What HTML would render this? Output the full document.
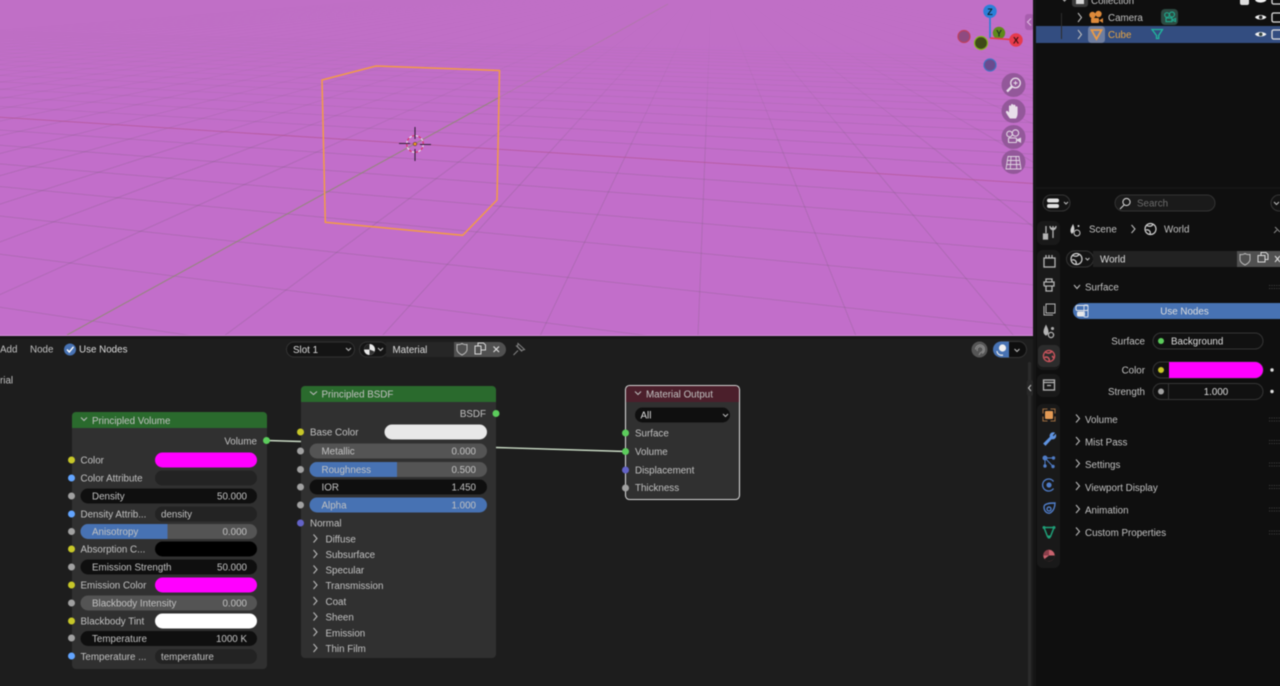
<!DOCTYPE html>
<html lang="en"><head><meta charset="utf-8"><title>Blender Shading</title>
<style>
html,body{margin:0;padding:0;width:1280px;height:686px;overflow:hidden;background:#1d1d1d}
#clip{position:absolute;left:0;top:0;width:1280px;height:686px;overflow:hidden;contain:paint}
svg{display:block;position:absolute;left:-10px;top:-10px;filter:blur(.45px)}
text{font-family:"Liberation Sans",sans-serif;font-size:9.8px;fill:#c2c2c2}
.e{text-anchor:end}.m{text-anchor:middle}.w{fill:#dedede}
.ch{fill:none;stroke:#b8b8b8;stroke-width:1.1}
</style></head><body>
<div id="clip">
<svg width="1300" height="706" viewBox="-10 -10 1300 706" xmlns="http://www.w3.org/2000/svg">
<defs>
<linearGradient id="fade" x1="0" y1="0" x2="0" y2="1"><stop offset="0" stop-color="#c06fc6"/><stop offset=".3" stop-color="#c06fc6" stop-opacity=".85"/><stop offset="1" stop-color="#c26eca" stop-opacity="0"/></linearGradient>
<clipPath id="vp"><rect x="-10" y="-10" width="1043" height="345"/></clipPath>
</defs>
<rect x="-10" y="-10" width="1300" height="706" fill="#1d1d1d"/>
<!-- viewport -->
<g clip-path="url(#vp)">
<rect x="-10" y="-10" width="1043" height="345" fill="#c26eca"/>
<g stroke="#5a5a5a" stroke-opacity=".18" stroke-width="1" fill="none">
<path d="M-10 305.7L1033 460.9M-10 252.9L1033 384.1M-10 214.9L1033 327.8M-10 185.6L1033 284.9M-10 163L1033 251.5M-10 144.5L1033 224.4M-10 129.3L1033 202.3M-10 105.8L1033 167.7M-10 96.5L1033 154.1M-10 88.5L1033 142.3M-10 81.4L1033 132M-10 75L1033 122.7M-10 69.5L1033 114.5M-10 64.5L1033 107.2M-10 60L1033 100.6M-10 56L1033 94.6M-10 52.2L1033 89.2M-10 48.8L1033 84.2M-10 45.7L1033 79.6M-10 42.8L1033 75.4M-10 40.1L1033 71.5M-10 37.7L1033 67.9M-10 35.4L1033 64.6M-10 33.3L1033 61.5M-10 31.2L1033 58.4"/>
<path d="M712 -26L-3884 336M712 -26L-3726 336M712 -26L-3568 336M712 -26L-3410 336M712 -26L-3252 336M712 -26L-3094 336M712 -26L-2936 336M712 -26L-2778 336M712 -26L-2620 336M712 -26L-2462 336M712 -26L-2304 336M712 -26L-2146 336M712 -26L-1988 336M712 -26L-1830 336M712 -26L-1672 336M712 -26L-1514 336M712 -26L-1356 336M712 -26L-1198 336M712 -26L-1040 336M712 -26L-882 336M712 -26L-724 336M712 -26L-566 336M712 -26L-408 336M712 -26L-250 336M712 -26L-92 336M712 -26L224 336M712 -26L382 336M712 -26L540 336M712 -26L698 336M712 -26L856 336M712 -26L1014 336M712 -26L1172 336M712 -26L1330 336M712 -26L1488 336M712 -26L1646 336M712 -26L1804 336M712 -26L1962 336M712 -26L2120 336M712 -26L2278 336M712 -26L2436 336M712 -26L2594 336M712 -26L2752 336"/>
</g>
<rect x="-10" y="-10" width="1043" height="175" fill="url(#fade)"/>
<path d="M-10 116.6L1033 183.5" stroke="#b0558f" stroke-width="1" fill="none" opacity=".65"/>
<path d="M67 335L500 97" stroke="#8d8a72" stroke-width="1.1" fill="none" opacity=".85"/>
<path d="M500 97L668 4" stroke="#8d8a72" stroke-width="1" fill="none" opacity=".3"/>
<path d="M322 80L376 66L499.5 70.5L497 200L462.7 235.3L325.3 222.3Z" fill="none" stroke="#f29b47" stroke-width="1.5"/>
<!-- 3D cursor -->
<circle cx="415" cy="144" r="8.3" fill="none" stroke="#e8e0ea" stroke-width="1.2" stroke-dasharray="3.2 3.3"/>
<circle cx="415" cy="144" r="8.3" fill="none" stroke="#d8366a" stroke-width="1.2" stroke-dasharray="3.2 3.3" stroke-dashoffset="3.2"/>
<path d="M415 127V139M415 149V161M399 143.5H410M420 144.5H431" stroke="#33213a" stroke-width="1.1"/>
<circle cx="415" cy="144" r="1.8" fill="#f09a20" stroke="#33213a" stroke-width=".5"/>
<!-- gizmo -->
<circle cx="964" cy="36.5" r="6" fill="#8f4a80" stroke="#c0405c" stroke-width="1.2"/>
<circle cx="990" cy="65" r="6" fill="#6a4a8e" stroke="#3e74c4" stroke-width="1.2"/>
<circle cx="999" cy="33" r="6.2" fill="#5f8a1a"/>
<path d="M990 38V16" stroke="#2a7fd6" stroke-width="1.6"/>
<path d="M990 38L1011 39.6" stroke="#e63a4c" stroke-width="1.6"/>
<circle cx="981" cy="43" r="6.5" fill="#3f4a18" stroke="#84b81e" stroke-width="1.2"/>
<circle cx="990" cy="11.3" r="6.7" fill="#2a80d8"/>
<circle cx="1016" cy="40" r="6.7" fill="#e63a4c"/>
<text x="990" y="15" class="m" style="font-size:9px;font-weight:bold;fill:#123">Z</text>
<text x="1016" y="43.5" class="m" style="font-size:9px;font-weight:bold;fill:#411">X</text>
<text x="999" y="36.5" class="m" style="font-size:9px;font-weight:bold;fill:#232">Y</text>
<!-- nav buttons -->
<g fill="#93589a"><circle cx="1013.5" cy="85" r="12"/><circle cx="1013.5" cy="111" r="12"/><circle cx="1013.5" cy="137" r="12"/><circle cx="1013.5" cy="162" r="12"/><rect x="1025" y="14" width="9" height="16" rx="3" fill="#a85eae"/></g>
<path d="M1031 18.5L1027.5 22L1031 25.5" fill="none" stroke="#d9b4dc" stroke-width="1.2"/>
<g fill="none" stroke="#e6dce8" stroke-width="1.3">
<circle cx="1015.5" cy="83" r="4.8"/><path d="M1012 86.5L1007 91.5" stroke-width="2.4"/><path d="M1013.5 83H1017.5M1015.5 81V85" stroke-width="1"/>
</g>
<path d="M1010 118.5C1008 116 1006.5 113.5 1006 112.5C1005.5 111 1007 110.3 1008 111.3L1009 112.5V106.5C1009 105 1010.8 105 1011 106.5V105C1011 103.6 1013 103.6 1013.2 105V105.5C1013.4 104.2 1015.4 104.3 1015.5 105.8V107C1015.8 105.8 1017.6 106 1017.6 107.3V113C1017.6 116 1016.6 117.5 1016 118.5Z" fill="#e8dfea"/>
<g fill="none" stroke="#e0d4e2" stroke-width="1.1">
<circle cx="1009.5" cy="134" r="2.8"/><circle cx="1015.5" cy="133" r="3.2"/><rect x="1008.5" y="138" width="8" height="4.5" rx=".8"/><path d="M1017 140L1020.5 138.4V142L1017 140Z" fill="#e0d4e2"/>
<path d="M1008 156.5H1019L1021 169H1006ZM1006.8 160.5H1019.8M1006.2 164.5H1020.4M1011 156.5L1010.3 169M1016 156.5L1016.8 169" stroke-width=".9"/>
</g>
</g>
<rect x="-10" y="335" width="1043" height="1" fill="#d58edb"/>
<rect x="-10" y="336" width="1046" height="3" fill="#151515"/>

<!-- right column -->
<rect x="1033" y="-10" width="257" height="706" fill="#151515"/>
<rect x="1036" y="-10" width="254" height="197" fill="#0f0f0f"/>
<rect x="1036" y="189" width="254" height="507" fill="#0f0f0f"/>
<rect x="1036" y="26" width="254" height="17" fill="#334d80"/>
<rect x="1061" y="13" width="1" height="26" fill="#2c2c2c"/>
<!-- outliner -->
<path d="M1062 -2L1064.5 1L1067 -2" class="ch"/>
<rect x="1072" y="-8" width="16" height="15" rx="3" fill="#3a3a3a"/><rect x="1076" y="-5" width="8" height="9" fill="#d5d5d5"/>
<text x="1091" y="4">Collection</text>
<rect x="1240" y="-4" width="9" height="9" rx="2" fill="#ddd"/>
<path d="M1078 13L1081.5 17.5L1078 22M1078 30L1081.5 34.5L1078 39" class="ch"/>
<g fill="#df8a3a"><circle cx="1092.5" cy="15" r="3.2"/><circle cx="1098.5" cy="14" r="3.2"/><rect x="1091" y="18" width="8" height="5" rx="1"/><path d="M1099 20.5L1103 18V23Z"/></g>
<text x="1108" y="21">Camera</text>
<rect x="1161" y="9" width="17" height="16" rx="4" fill="#2d4a42"/>
<g fill="none" stroke="#21a58a" stroke-width="1.2"><circle cx="1167" cy="15" r="2.3"/><circle cx="1172" cy="14.5" r="2.5"/><rect x="1166" y="18" width="6" height="3.6"/><path d="M1172 20L1175.5 18.5V21.5Z"/></g>
<rect x="1088" y="26" width="17" height="17" rx="3.5" fill="#6f7ea0"/>
<path d="M1091.5 30H1101.5L1096.5 39Z" fill="none" stroke="#ec9a45" stroke-width="1.8"/>
<text x="1108" y="38" style="fill:#e8a542">Cube</text>
<path d="M1152 29.5H1162.5L1158.7 35.5V38.5H1156.5V35.5ZM1152 29.5" fill="none" stroke="#20b79c" stroke-width="1.3"/>
<g><path d="M1255 17.3C1257 14.2 1264 14.2 1266.5 17.3C1264 20.4 1257 20.4 1255 17.3Z" fill="#f0f0f0"/><circle cx="1260.7" cy="17.3" r="1.8" fill="#222"/>
<path d="M1255 34.3C1257 31.2 1264 31.2 1266.5 34.3C1264 37.4 1257 37.4 1255 34.3Z" fill="#f0f0f0"/><circle cx="1260.7" cy="34.3" r="1.8" fill="#344"/>
<path d="M1255 0.3C1257 -2.8 1264 -2.8 1266.5 0.3C1264 3.4 1257 3.4 1255 0.3Z" fill="#f0f0f0"/>
<rect x="1272" y="13" width="10" height="9" rx="1.5" fill="none" stroke="#ddd" stroke-width="1.3"/><rect x="1272" y="30" width="10" height="9" rx="1.5" fill="none" stroke="#ddd" stroke-width="1.3"/><rect x="1272" y="-3" width="10" height="7" rx="1.5" fill="none" stroke="#ddd" stroke-width="1.3"/></g>
<!-- properties header -->
<rect x="1043" y="195" width="27" height="16" rx="8" fill="#131313" stroke="#353535"/>
<rect x="1047" y="198.5" width="12" height="4" rx="2" fill="#e0e0e0"/><rect x="1047" y="204" width="12" height="4" rx="2" fill="#e0e0e0"/>
<path d="M1064 202L1066 204L1068 202" class="ch"/>
<rect x="1115" y="195" width="100" height="16" rx="8" fill="#1a1a1a" stroke="#333"/>
<g fill="none" stroke="#d0d0d0" stroke-width="1.1"><circle cx="1126.5" cy="202" r="3.6"/><path d="M1124 205L1120 209"/></g>
<text x="1137" y="206.5" style="fill:#6c6c6c">Search</text>
<rect x="1271" y="195" width="20" height="16" rx="8" fill="#131313" stroke="#353535"/>
<path d="M1274 202L1276.5 204.5L1279 202" class="ch"/>
<!-- tabs -->
<rect x="1037" y="221" width="23" height="24" rx="6" fill="#191919"/>
<rect x="1037" y="250" width="23" height="120" rx="6" fill="#191919"/>
<rect x="1037" y="374" width="23" height="23" rx="6" fill="#191919"/>
<rect x="1037" y="404" width="23" height="164" rx="6" fill="#191919"/>
<rect x="1038" y="345" width="22" height="22" rx="5" fill="#2c2c2c"/>
<g fill="none" stroke="#b4b4b4" stroke-width="1.3">
<path d="M1046 226V233M1053 226V238M1050 226.5C1050 229 1056 229 1056 226.5M1050 226C1050 231 1056 231 1056 226"/><rect x="1043.5" y="234" width="4" height="5" fill="#b4b4b4"/>
<rect x="1044" y="258" width="11" height="9"/><path d="M1046 258V255M1049 258V255M1052 258V255"/>
<path d="M1044 286V282H1054V286H1044M1046 282V279H1052V282M1046 286V291H1052V286"/>
<rect x="1046" y="304" width="9" height="9" stroke-width="1"/><path d="M1044 306V315H1053" stroke-width="1"/>
<path d="M1046 326C1044 330 1043 333 1046 335C1049 333 1048 330 1046 326Z" fill="#b4b4b4"/><circle cx="1051" cy="335" r="2.6"/><circle cx="1052.5" cy="328.5" r=".9"/>
<rect x="1043.5" y="380" width="11" height="10"/><path d="M1043 382.5H1055M1047 385.5H1051"/>
</g>
<g fill="none" stroke="#c9545c" stroke-width="1.3"><circle cx="1049" cy="356" r="5.6"/><path d="M1045 352C1048 354 1051 353 1052 351M1044.5 357.5C1048 356 1050 359 1049 361.5M1052 356L1054 358" stroke-width="1.6"/></g>
<rect x="1045" y="411" width="8" height="8" rx="1" fill="#e39a55"/>
<path d="M1043 413.5V409H1047.5M1050.5 409H1055V413.5M1055 416.5V421H1050.5M1047.5 421H1043V416.5" fill="none" stroke="#9b6b3f" stroke-width="1.1"/>
<path d="M1044 443.5L1050.5 437C1049.5 434.5 1051.5 432.5 1054 433L1052 435.5L1053.5 437L1055.5 435C1056 437.5 1054 439.5 1051.5 438.5L1045.5 445Z" fill="#5f93e0" stroke="#5f93e0" stroke-width="1.2"/>
<g fill="#4f7cc7" stroke="#4f7cc7"><circle cx="1045" cy="458" r="2"/><circle cx="1053.5" cy="458" r="1.2"/><circle cx="1045" cy="466" r="1.2"/><circle cx="1053" cy="466.5" r="1.2"/><path d="M1045 458H1053M1045 458V466M1045 458L1053 466.5" fill="none"/></g>
<g fill="none" stroke="#4f7cc7" stroke-width="1.3"><path d="M1053.5 481.5A6 6 0 1 0 1053.5 488.5"/></g><circle cx="1049" cy="485" r="2.6" fill="#4f7cc7"/>
<g fill="none" stroke="#4f7cc7" stroke-width="1.4"><path d="M1044 507C1044 511 1047 514 1050 513C1054 511 1055 506 1055 503C1051 503 1044 503 1044 507Z"/><circle cx="1049" cy="509" r="2"/></g>
<path d="M1044 527.5H1054L1050.5 536.5H1047.5Z" fill="none" stroke="#1f9f78" stroke-width="1.5"/><g fill="#1f9f78"><circle cx="1044" cy="527.5" r="1.5"/><circle cx="1054" cy="527.5" r="1.5"/><circle cx="1049" cy="537" r="1.6"/></g>
<circle cx="1049" cy="555.5" r="5.7" fill="#c9636e"/><path d="M1049 555.5H1054.7A5.7 5.7 0 0 1 1044.5 559Z" fill="#1a1a1a"/><path d="M1049 555.5V549.8A5.7 5.7 0 0 0 1043.3 555.5Z" fill="#8a3f4a"/>
<!-- breadcrumb -->
<path d="M1073 224C1071 228 1069 231 1072 234C1075 231 1075 228 1073 224Z" fill="#d0d0d0"/><g fill="none" stroke="#c4c4c4" stroke-width="1"><circle cx="1077" cy="233" r="3"/></g><circle cx="1078.5" cy="226" r="1" fill="#ccc"/>
<text x="1089" y="232.5">Scene</text>
<path d="M1131.5 225L1135 229L1131.5 233" class="ch"/>
<g fill="none" stroke="#d0d0d0" stroke-width="1.2"><circle cx="1150.5" cy="229" r="5.5"/><path d="M1146.5 225.5C1150 227 1152 226 1153 224.5M1146 230C1149 229 1151 232 1150 234"/></g>
<text x="1164" y="232.5">World</text>
<path d="M1274 233L1277 230M1275 227L1280 232" fill="none" stroke="#888"/>
<!-- world selector -->
<rect x="1066.5" y="251" width="27" height="16" rx="8" fill="#131313" stroke="#343434"/>
<rect x="1093" y="251" width="144" height="16" fill="#222"/>
<rect x="1237" y="251" width="53" height="16" fill="#505050"/>
<g fill="none" stroke="#d0d0d0" stroke-width="1.2"><circle cx="1076.5" cy="259" r="5.5"/><path d="M1072.5 255.5C1076 257 1078 256 1079 254.5M1072 260C1075 259 1077 262 1076 264"/></g>
<path d="M1085.5 258L1087.5 260L1089.5 258" class="ch"/>
<text x="1100" y="262.5" class="w">World</text>
<path d="M1240 254.5C1243 255 1244 254 1245 253.5C1246 254 1247 255 1250 254.5V260C1249.5 262.5 1247 264 1245 265C1243 264 1240.5 262.5 1240 260Z" fill="none" stroke="#b9b9b9"/>
<path d="M1258 255.5H1265V262H1258ZM1261 255.5V252.5H1266L1268 254.5V259.5H1265" fill="none" stroke="#d9d9d9"/>
<path d="M1275 256L1280 262M1280 256L1275 262" stroke="#d9d9d9" stroke-width="1.1"/>
<!-- Surface panel -->
<path d="M1074 285L1077 288.5L1080 285" class="ch"/>
<text x="1085" y="290.5">Surface</text>
<rect x="1073" y="303" width="217" height="16" rx="8" fill="#4772b3"/>
<rect x="1076" y="305.5" width="12" height="5" rx="1.5" fill="none" stroke="#e8e8e8"/><rect x="1077" y="311.5" width="8" height="5" rx="1.5" fill="#e8e8e8"/><rect x="1084" y="305" width="4" height="12" rx="1" fill="none" stroke="#cfd9ea"/>
<text x="1184.5" y="314.5" class="m w">Use Nodes</text>
<text x="1145" y="344.5" class="e">Surface</text>
<rect x="1153" y="333" width="110" height="16" rx="8" fill="#111" stroke="#353535"/>
<circle cx="1161" cy="341" r="3" fill="#5ccc5c"/>
<text x="1171" y="344.5" class="w">Background</text>
<text x="1145" y="373.5" class="e">Color</text>
<rect x="1153" y="362" width="110" height="16" rx="8" fill="#111" stroke="#353535"/>
<path d="M1169 362H1255A8 8 0 0 1 1255 378H1169Z" fill="#ff00ff"/>
<circle cx="1161" cy="370" r="3" fill="#c7c729"/>
<circle cx="1272" cy="370" r="1.7" fill="#e0e0e0"/>
<text x="1145" y="395" class="e">Strength</text>
<rect x="1153" y="383.5" width="110" height="16" rx="8" fill="#111" stroke="#353535"/>
<rect x="1168" y="384" width="1" height="15" fill="#353535"/>
<circle cx="1161" cy="391.5" r="3" fill="#a1a1a1"/>
<text x="1216" y="395" class="m w">1.000</text>
<circle cx="1272" cy="391.5" r="1.7" fill="#e0e0e0"/>
<g class="ch"><path d="M1076 414.5L1079.5 418.5L1076 422.5M1076 437L1079.5 441L1076 445M1076 459.5L1079.5 463.5L1076 467.5M1076 482L1079.5 486L1076 490M1076 505L1079.5 509L1076 513M1076 527.5L1079.5 531.5L1076 535.5"/></g>
<text x="1085" y="423">Volume</text>
<text x="1085" y="445.5">Mist Pass</text>
<text x="1085" y="468">Settings</text>
<text x="1085" y="491">Viewport Display</text>
<text x="1085" y="513.5">Animation</text>
<text x="1085" y="536">Custom Properties</text>
<g stroke="#3c3c3c" stroke-dasharray="1.2 1.2" stroke-width="1"><path d="M1269 285.5H1280M1269 288.5H1280M1269 418H1280M1269 421H1280M1269 440.5H1280M1269 443.5H1280M1269 463H1280M1269 466H1280M1269 485.5H1280M1269 488.5H1280M1269 508H1280M1269 511H1280M1269 531H1280M1269 534H1280"/></g>

<!-- node editor header -->
<text x="0" y="352.5">Add</text>
<text x="30" y="352.5">Node</text>
<circle cx="70" cy="349.5" r="6" fill="#4772b3"/>
<path d="M67 349.5L69.3 352L73.5 346.8" fill="none" stroke="#fff" stroke-width="1.4"/>
<text x="79" y="352.5" class="w">Use Nodes</text>
<text x="0" y="383.5">rial</text>
<rect x="286.5" y="342" width="68" height="15" rx="7.5" fill="#141414" stroke="#333"/>
<text x="293" y="352.8" class="w">Slot 1</text>
<path d="M346 348L348.5 350.5L351 348" class="ch"/>
<rect x="359.5" y="342" width="28" height="15" rx="7.5" fill="#141414" stroke="#333"/>
<rect x="386" y="342" width="69" height="15" fill="#262626"/>
<path d="M454 342H498.5A7.5 7.5 0 0 1 498.5 357H454Z" fill="#505050"/>
<circle cx="369.5" cy="349.5" r="5.5" fill="#e8e8e8"/><path d="M369.5 349.5H364A5.5 5.5 0 0 1 369.5 344Z" fill="#222"/><path d="M369.5 349.5L374.5 351.5A5.5 5.5 0 0 1 369.5 355Z" fill="#333"/>
<path d="M378 348L380.5 350.5L383 348" class="ch"/>
<text x="392.5" y="352.8" class="w">Material</text>
<path d="M457 344.5C460 345 461 344 462 343.5C463 344 464 345 467 344.5V350C466.5 352.5 464 354 462 355C460 354 457.5 352.5 457 350Z" fill="none" stroke="#b9b9b9"/>
<path d="M475 346H481V354H475ZM478 346V343H483.5L485.5 345V350H481" fill="none" stroke="#d9d9d9"/>
<path d="M493.5 346.5L499 352M499 346.5L493.5 352" stroke="#dcdcdc" stroke-width="1.2"/>
<path d="M513.5 355L518 350.5M516 345.5L522 351.5M518 343.5L524.5 349.5L521.5 350.5L517.5 346.5Z" fill="none" stroke="#808080" stroke-width="1.1"/>
<circle cx="979.5" cy="349.5" r="8" fill="#555"/>
<path d="M975.5 349.5A4.5 4.5 0 1 1 982 353.5M977.5 351A3 3 0 1 1 980.5 352.5L979 355" fill="none" stroke="#8c8c8c" stroke-width="1.1"/>
<path d="M1001 341.5H1018.5A8 8 0 0 1 1018.5 357.5H1001Z" fill="#0e0e0e" stroke="#333"/>
<path d="M1001 341.5A8 8 0 0 0 1001 357.5H1009V341.5Z" fill="#4772b3"/>
<circle cx="1002.5" cy="348" r="3.6" fill="#f0f0f0"/><path d="M997 351A4.5 4.5 0 0 0 1003 355" fill="none" stroke="#e8e8e8" stroke-width="1.2"/>
<path d="M1014.5 349L1017 351.5L1019.5 349" class="ch"/>
<rect x="1028" y="362" width="3" height="334" rx="1.5" fill="#2b2b2b"/>
<rect x="1027" y="380" width="6" height="16" rx="2" fill="#282828"/>
<path d="M1031 385L1028.5 388L1031 391" class="ch"/>

<!-- wires -->
<path d="M267 440.5L301 441.5M496 447.5L626 451.5" stroke="#cbdcc6" stroke-width="1.4" fill="none"/>

<!-- Principled Volume -->
<rect x="72" y="412" width="195" height="257" rx="4" fill="#303030"/>
<path d="M72 428V416A4 4 0 0 1 76 412H263A4 4 0 0 1 267 416V428Z" fill="#2a6a2d"/>
<path d="M81 417.5L84 420.5L87 417.5" class="ch"/>
<text x="92" y="424">Principled Volume</text>
<text x="257" y="444.5" class="e">Volume</text>
<rect x="155" y="452.5" width="102" height="15" rx="7.5" fill="#ff00ff"/>
<text x="80.5" y="463.5">Color</text>
<rect x="155" y="470.5" width="102" height="15" rx="7.5" fill="#232323"/>
<text x="80.5" y="481.5">Color Attribute</text>
<rect x="80.5" y="488.5" width="176.5" height="15" rx="7.5" fill="#0f0f0f"/>
<text x="92" y="499.5">Density</text><text x="247" y="499.5" class="e">50.000</text>
<text x="80.5" y="517.5">Density Attrib...</text>
<rect x="155" y="506.5" width="102" height="15" rx="7.5" fill="#232323"/>
<text x="161" y="517.5">density</text>
<rect x="80.5" y="524" width="176.5" height="15" rx="7.5" fill="#545454"/>
<path d="M88 524H167.5V539H88A7.5 7.5 0 0 1 88 524Z" fill="#4772b3"/>
<text x="92" y="535">Anisotropy</text><text x="247" y="535" class="e">0.000</text>
<text x="80.5" y="552.5">Absorption C...</text>
<rect x="155" y="541.5" width="102" height="15" rx="7.5" fill="#000"/>
<rect x="80.5" y="559.5" width="176.5" height="15" rx="7.5" fill="#0f0f0f"/>
<text x="92" y="570.5">Emission Strength</text><text x="247" y="570.5" class="e">50.000</text>
<text x="80.5" y="588.5">Emission Color</text>
<rect x="155" y="577.5" width="102" height="15" rx="7.5" fill="#ff00ff"/>
<rect x="80.5" y="595.5" width="176.5" height="15" rx="7.5" fill="#545454"/>
<text x="92" y="606.5">Blackbody Intensity</text><text x="247" y="606.5" class="e">0.000</text>
<text x="80.5" y="624.5">Blackbody Tint</text>
<rect x="155" y="613.5" width="102" height="15" rx="7.5" fill="#fff"/>
<rect x="80.5" y="631" width="176.5" height="15" rx="7.5" fill="#0f0f0f"/>
<text x="92" y="642">Temperature</text><text x="247" y="642" class="e">1000 K</text>
<text x="80.5" y="660">Temperature ...</text>
<rect x="155" y="649" width="102" height="15" rx="7.5" fill="#232323"/>
<text x="161" y="660">temperature</text>
<g>
<circle cx="266.5" cy="440.5" r="3.5" fill="#5ccc5c"/>
<circle cx="71.5" cy="460" r="3.5" fill="#c7c729"/><circle cx="71.5" cy="478" r="3.5" fill="#63a5ff"/><circle cx="71.5" cy="496" r="3.5" fill="#a1a1a1"/><circle cx="71.5" cy="514" r="3.5" fill="#63a5ff"/><circle cx="71.5" cy="531.5" r="3.5" fill="#a1a1a1"/><circle cx="71.5" cy="549" r="3.5" fill="#c7c729"/><circle cx="71.5" cy="567" r="3.5" fill="#a1a1a1"/><circle cx="71.5" cy="585" r="3.5" fill="#c7c729"/><circle cx="71.5" cy="603" r="3.5" fill="#a1a1a1"/><circle cx="71.5" cy="621" r="3.5" fill="#c7c729"/><circle cx="71.5" cy="638" r="3.5" fill="#a1a1a1"/><circle cx="71.5" cy="656" r="3.5" fill="#63a5ff"/>
</g>

<!-- Principled BSDF -->
<rect x="301" y="386" width="195" height="272" rx="4" fill="#303030"/>
<path d="M301 402V390A4 4 0 0 1 305 386H492A4 4 0 0 1 496 390V402Z" fill="#2a6a2d"/>
<path d="M310 391.5L313.5 394.5L317 391.5" class="ch"/>
<text x="321.5" y="397.5">Principled BSDF</text>
<text x="486" y="417" class="e">BSDF</text>
<text x="310" y="435.5">Base Color</text>
<rect x="384.5" y="424.5" width="102.5" height="15" rx="7.5" fill="#e8e8e8"/>
<rect x="309.5" y="443.5" width="177.5" height="15" rx="7.5" fill="#545454"/>
<text x="321.5" y="454.5">Metallic</text><text x="476" y="454.5" class="e">0.000</text>
<rect x="309.5" y="462" width="177.5" height="15" rx="7.5" fill="#545454"/>
<path d="M317 462H397V477H317A7.5 7.5 0 0 1 317 462Z" fill="#4772b3"/>
<text x="321.5" y="473">Roughness</text><text x="476" y="473" class="e">0.500</text>
<rect x="309.5" y="479.5" width="177.5" height="15" rx="7.5" fill="#0f0f0f"/>
<text x="321.5" y="490.5">IOR</text><text x="476" y="490.5" class="e">1.450</text>
<rect x="309.5" y="497.5" width="177.5" height="15" rx="7.5" fill="#4772b3"/>
<text x="321.5" y="508.5">Alpha</text><text x="476" y="508.5" class="e">1.000</text>
<text x="310" y="526.5">Normal</text>
<path d="M313.5 534.5L317 538.5L313.5 542.5M313.5 550L317 554L313.5 558M313.5 565.5L317 569.5L313.5 573.5M313.5 581L317 585L313.5 589M313.5 597L317 601L313.5 605M313.5 612.5L317 616.5L313.5 620.5M313.5 628L317 632L313.5 636M313.5 644L317 648L313.5 652" class="ch"/>
<text x="325.5" y="542.5">Diffuse</text>
<text x="325.5" y="558">Subsurface</text>
<text x="325.5" y="573.5">Specular</text>
<text x="325.5" y="589">Transmission</text>
<text x="325.5" y="605">Coat</text>
<text x="325.5" y="620.5">Sheen</text>
<text x="325.5" y="636.5">Emission</text>
<text x="325.5" y="652">Thin Film</text>
<circle cx="496" cy="413.5" r="3.5" fill="#5ccc5c"/>
<circle cx="300.5" cy="432" r="3.5" fill="#c7c729"/><circle cx="300.5" cy="451" r="3.5" fill="#a1a1a1"/><circle cx="300.5" cy="469.5" r="3.5" fill="#a1a1a1"/><circle cx="300.5" cy="487" r="3.5" fill="#a1a1a1"/><circle cx="300.5" cy="505" r="3.5" fill="#a1a1a1"/><circle cx="300.5" cy="523" r="3.5" fill="#6363c7"/>

<!-- Material Output -->
<rect x="625.5" y="385.5" width="114" height="114" rx="4" fill="#303030" stroke="#d4d4d4" stroke-width="1.1"/>
<path d="M626 402V390A4 4 0 0 1 630 386H735A4 4 0 0 1 739 390V402Z" fill="#4b1f2b"/>
<path d="M635 391.5L638 394.5L641 391.5" class="ch"/>
<text x="646" y="397.5">Material Output</text>
<rect x="635" y="407.5" width="95" height="15" rx="7.5" fill="#0f0f0f"/>
<text x="640.5" y="418.5" class="w">All</text>
<path d="M723 414L725.5 416.5L728 414" class="ch"/>
<text x="635" y="436.5">Surface</text>
<text x="635" y="455">Volume</text>
<text x="635" y="473.5">Displacement</text>
<text x="635" y="491">Thickness</text>
<circle cx="625.5" cy="433" r="3.5" fill="#5ccc5c"/><circle cx="625.5" cy="451.5" r="3.5" fill="#5ccc5c"/><circle cx="625.5" cy="470" r="3.5" fill="#6363c7"/><circle cx="625.5" cy="488" r="3.5" fill="#a1a1a1"/>
</svg>
</div>
</body></html>
